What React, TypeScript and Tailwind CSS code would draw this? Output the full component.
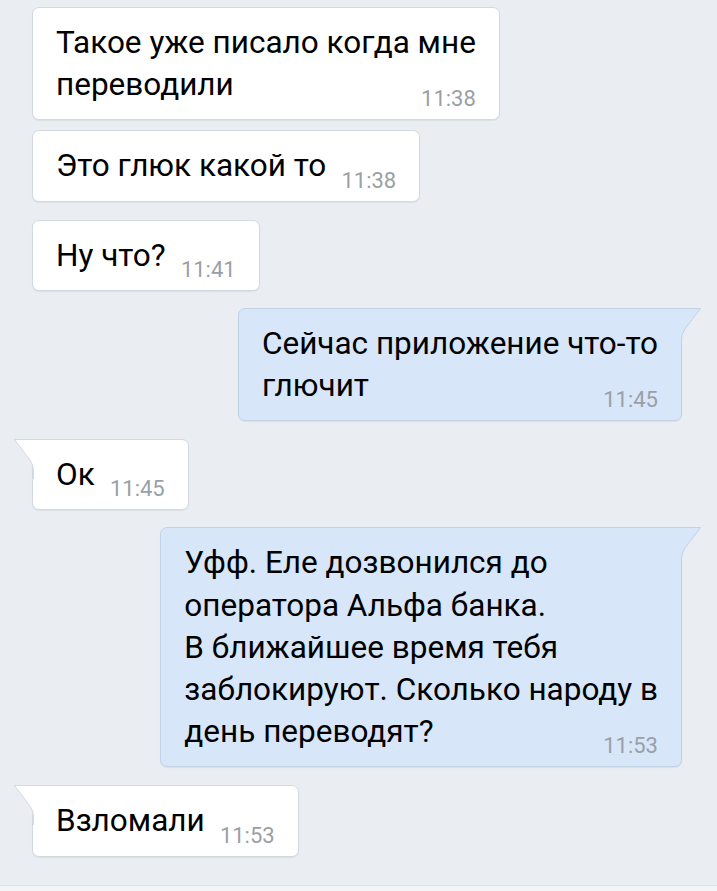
import React from "react";

type Msg = {
  lines: string[];
  time: string;
  out: boolean;
  tail: boolean;
  mt: string;
};

const msgs: Msg[] = [
  { lines: ["Такое уже писало когда мне", "переводили"], time: "11:38", out: false, tail: false, mt: "mt-[7px]" },
  { lines: ["Это глюк какой то"], time: "11:38", out: false, tail: false, mt: "mt-[10px]" },
  { lines: ["Ну что?"], time: "11:41", out: false, tail: false, mt: "mt-[18px]" },
  { lines: ["Сейчас приложение что-то", "глючит"], time: "11:45", out: true, tail: true, mt: "mt-[17px]" },
  { lines: ["Ок"], time: "11:45", out: false, tail: true, mt: "mt-[18px]" },
  {
    lines: [
      "Уфф. Еле дозвонился до",
      "оператора Альфа банка.",
      "В ближайшее время тебя",
      "заблокируют. Сколько народу в",
      "день переводят?",
    ],
    time: "11:53",
    out: true,
    tail: true,
    mt: "mt-[17px]",
  },
  { lines: ["Взломали"], time: "11:53", out: false, tail: true, mt: "mt-[18px]" },
];

function TailRight() {
  return (
    <svg
      className="absolute top-[-1px] left-[calc(100%-1.5px)]"
      width="24"
      height="40"
      viewBox="0 0 24 40"
    >
      <path d="M0 0.5 L20.5 0.5 L5 21 Q1.5 26 1.5 32 L1.5 40 L0 40 Z" fill="#d7e6f8" />
      <path d="M0 0.5 L20.5 0.5 L5 21 Q1.5 26 1.5 32 L1.5 40" fill="none" stroke="#c2d2e4" strokeWidth="1" />
    </svg>
  );
}

function TailLeft() {
  return (
    <svg
      className="absolute top-[-1px] right-[calc(100%-1.5px)]"
      width="24"
      height="40"
      viewBox="0 0 24 40"
    >
      <path d="M24 0.5 L3.5 0.5 L19 21 Q22.5 26 22.5 32 L22.5 40 L24 40 Z" fill="#ffffff" />
      <path d="M24 0.5 L3.5 0.5 L19 21 Q22.5 26 22.5 32 L22.5 40" fill="none" stroke="#d3d9e1" strokeWidth="1" />
    </svg>
  );
}

function Bubble({ m }: { m: Msg }) {
  const base = m.out
    ? "bg-[#d7e6f8] border-[#c2d2e4] self-end"
    : "bg-white border-[#d3d9e1] self-start";
  const corner = m.tail ? (m.out ? "rounded-tr-none" : "rounded-tl-none") : "";
  return (
    <div
      className={`${m.mt} ${base} ${corner} relative border rounded-[7px] pl-[23px] pr-[23px] pt-[14px] pb-[13px] shadow-[0_1px_1px_rgba(40,60,90,0.08)]`}
    >
      {m.tail && (m.out ? <TailRight /> : <TailLeft />)}
      <div className="grid">
        <div className="[grid-area:1/1] whitespace-pre text-[31.5px] leading-[42.2px] text-black">
          {m.lines.map((l, i) => (
            <div key={i}>
              {l}
              {i === m.lines.length - 1 && <span className="inline-block w-[70px]" />}
            </div>
          ))}
        </div>
        <div className="[grid-area:1/1] self-end justify-self-end text-[22px] leading-[21px] text-[#9a9fa6] translate-y-[3px]">
          {m.time}
        </div>
      </div>
    </div>
  );
}

export default function App() {
  return (
    <div
      className="w-[717px] h-[891px] bg-[#eaeef3] flex flex-col overflow-hidden"
      style={{ fontFamily: "Roboto, 'Noto Sans', sans-serif" }}
    >
      <div className="flex-1 flex flex-col pl-[32px] pr-[35px]">
        {msgs.map((m, i) => (
          <Bubble key={i} m={m} />
        ))}
      </div>
      <div className="h-[6px] border-t border-[#dde2e8] bg-[#f3f5f7]" />
    </div>
  );
}
